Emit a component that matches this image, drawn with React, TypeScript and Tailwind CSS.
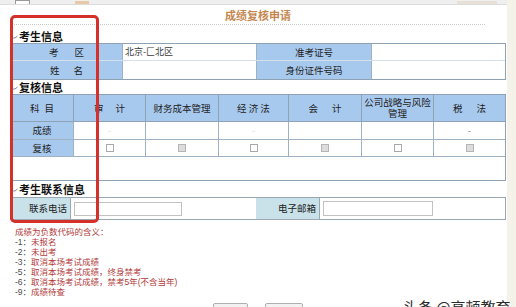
import React from "react";

const font = { fontFamily: '"Noto Sans CJK SC", "Noto Sans", sans-serif' };

function HeadIcon() {
  return (
    <svg width="8" height="7" viewBox="0 0 8 7" className="mr-[1px] shrink-0">
      <path d="M1 1.5 Q1.5 5.5 5 5 L7.5 3" fill="none" stroke="#6f8db0" strokeWidth="1" />
    </svg>
  );
}

function Heading({ text, className }: { text: string; className: string }) {
  return (
    <div className={`flex items-center text-[11px] font-bold text-[#111] ${className}`}>
      <HeadIcon />
      <span>{text}</span>
    </div>
  );
}

function Spaced({ a, b, gap }: { a: string; b: string; gap: string }) {
  return (
    <div className={`flex justify-center ${gap}`}>
      <span>{a}</span>
      <span>{b}</span>
    </div>
  );
}

function Box({ disabled }: { disabled?: boolean }) {
  return (
    <span
      className={`block w-[8px] h-[8px] border ${
        disabled ? "border-[#b5b5b5] bg-[#dcdcdc]" : "border-[#a9a9a9] bg-white"
      }`}
    />
  );
}

const subjects: { w: string; label: React.ReactNode; score: string; dim: boolean; disabled: boolean }[] = [
  { w: "w-[72px]", label: <Spaced a="审" b="计" gap="gap-[12px]" />, score: "-", dim: true, disabled: false },
  { w: "w-[73px]", label: "财务成本管理", score: "", dim: true, disabled: true },
  { w: "w-[70px]", label: "经 济 法", score: "-", dim: true, disabled: false },
  { w: "w-[73px]", label: <Spaced a="会" b="计" gap="gap-[14px]" />, score: "", dim: true, disabled: true },
  { w: "w-[72px]", label: <span className="leading-[11px] block px-[1px]">公司战略与风险管理</span>, score: "", dim: true, disabled: false },
  { w: "w-[72px]", label: <Spaced a="税" b="法" gap="gap-[14px]" />, score: "-", dim: false, disabled: true },
];

const notes: [string, string][] = [
  ["-1：", "未报名"],
  ["-2：", "未出考"],
  ["-3：", "取消本场考试成绩"],
  ["-5：", "取消本场考试成绩，终身禁考"],
  ["-6：", "取消本场考试成绩，禁考5年(不含当年)"],
  ["-9：", "成绩待查"],
];

export default function App() {
  return (
    <div className="relative w-[516px] h-[307px] overflow-hidden bg-white flex" style={font}>
      <div className="w-[507px] flex flex-col">
        {/* top strip */}
        <div className="h-[6px] bg-[#efefef] border-b border-[#dcdcdc] flex items-end">
          <span className="ml-[15px] w-[15px] h-[4px] border border-b-0 border-[#9a9a9a] bg-white" />
          <span className="ml-[45px] w-[14px] h-[3px] bg-[#e9c9a8]" />
          <span className="ml-auto mr-[10px] w-[40px] h-[3px] bg-[#e6e0d6]" />
        </div>

        <div className="pl-[10px] flex flex-col">
          {/* title */}
          <div className="h-[18px] w-[496px] flex items-end justify-center text-[11px] font-bold text-[#c4874f]">
            成绩复核申请
          </div>
          <div className="h-[2px] w-[475px] border-b border-dotted border-[#c9c9c9]" />

          <Heading text="考生信息" className="h-[18px] pt-[4px]" />

          {/* table 1 */}
          <div className="w-[496px] border border-[#8ea2b6] text-[9.5px] text-[#222]">
            {[
              { l1: <Spaced a="考" b="区" gap="gap-[16px]" />, v1: "北京-匚北区", l2: "准考证号" },
              { l1: <Spaced a="姓" b="名" gap="gap-[14px]" />, v1: "", l2: "身份证件号码" },
            ].map((r, i) => (
              <div key={i} className={`flex h-[17px] ${i === 0 ? "border-b border-[#d3dfea]" : "h-[18px]"}`}>
                <div className="w-[111px] bg-[#a8c9ee] flex items-center justify-center">{r.l1}</div>
                <div className="w-[134px] border-l border-[#9fb2c4] flex items-center pl-[2px] text-[9px] text-[#3a3a3a]">
                  {r.v1}
                </div>
                <div className="w-[115px] border-l border-[#9fb2c4] bg-[#a8c9ee] flex items-center justify-center">
                  {r.l2}
                </div>
                <div className="w-[134px] border-l border-[#9fb2c4]" />
              </div>
            ))}
          </div>

          <Heading text="复核信息" className="h-[14px] pt-[1px]" />

          {/* table 2 */}
          <div className="w-[496px] h-[87px] border border-[#8ea2b6] text-[9.5px] text-[#222]">
            <div className="flex h-[27px] bg-[#a8c9ee] border-b border-[#8ea2b6]">
              <div className="w-[62px] flex items-center justify-center">
                <Spaced a="科" b="目" gap="gap-[5px]" />
              </div>
              {subjects.map((s, i) => (
                <div key={i} className={`${s.w} border-l border-[#8ea2b6] flex items-center justify-center text-center`}>
                  {s.label}
                </div>
              ))}
            </div>
            <div className="flex h-[18px] border-b border-[#9fb2c4]">
              <div className="w-[62px] bg-[#a8c9ee] flex items-center justify-center">成绩</div>
              {subjects.map((s, i) => (
                <div
                  key={i}
                  className={`${s.w} border-l border-[#9fb2c4] flex items-center justify-center text-[8px] ${
                    s.dim ? "text-[#cfcfcf]" : "text-[#555]"
                  }`}
                >
                  {s.score}
                </div>
              ))}
            </div>
            <div className="flex h-[17px] border-b border-[#9fb2c4]">
              <div className="w-[62px] bg-[#a8c9ee] flex items-center justify-center">复核</div>
              {subjects.map((s, i) => (
                <div key={i} className={`${s.w} border-l border-[#9fb2c4] flex items-center justify-center`}>
                  <Box disabled={s.disabled} />
                </div>
              ))}
            </div>
          </div>

          <Heading text="考生联系信息" className="h-[16px] pt-[1px]" />

          {/* table 3 */}
          <div className="w-[496px] h-[23px] border border-[#9aa8b4] flex text-[9.5px] text-[#222]">
            <div className="w-[59px] bg-[#c9e2ea] flex items-center justify-end pr-[3px]">联系电话</div>
            <div className="w-[186px] border-l border-[#9aa8b4] flex items-center pl-[3px]">
              <span className="block w-[108px] h-[14px] border border-[#c2c2c2] bg-white" />
            </div>
            <div className="w-[63px] bg-[#c9e2ea] flex items-center justify-end pr-[3px]">电子邮箱</div>
            <div className="w-[186px] border-l border-[#9aa8b4] flex items-center pl-[3px]">
              <span className="block w-[110px] h-[15px] border border-[#c2c2c2] bg-white" />
            </div>
          </div>

          {/* notes */}
          <div
            className="mt-[7px] pl-[5px] text-[8.5px] leading-[10px] text-[#b23a3a]"
            style={{ fontFamily: '"Liberation Sans", "Noto Sans CJK SC", sans-serif' }}
          >
            <div>成绩为负数代码的含义：</div>
            {notes.map(([k, v]) => (
              <div key={k}>
                <span className="text-[#4a4a4a]">{k}</span>
                {v}
              </div>
            ))}
          </div>

          {/* buttons */}
          <div className="mt-[6px] flex">
            <span className="ml-[203px] w-[35px] h-[16px] border border-[#b0b0b0] bg-[#f2f2f2] rounded-[2px]" />
            <span className="ml-[17px] w-[38px] h-[16px] border border-[#b0b0b0] bg-[#f2f2f2] rounded-[2px]" />
          </div>
        </div>
      </div>
      <div className="w-[9px] bg-[#f5f2e9]" />

      {/* red annotation frame */}
      <div className="absolute left-[10px] top-[15px] w-[89px] h-[208px] border-[3px] border-[#d6302b] rounded-[5px]" />

      {/* watermark */}
      <div className="absolute left-[403px] top-[298px] text-[15px] leading-[18px] text-[#2a2a2a] whitespace-nowrap">
        头条 @高顿教育
      </div>
    </div>
  );
}
